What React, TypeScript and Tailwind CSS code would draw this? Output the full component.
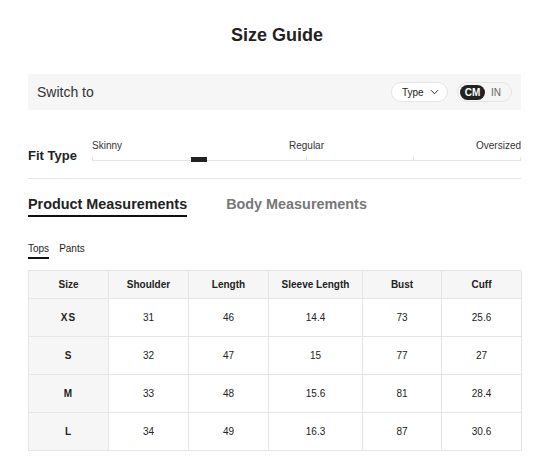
import type { FC } from 'react'

const columns = ['Size', 'Shoulder', 'Length', 'Sleeve Length', 'Bust', 'Cuff']

const rows = [
  ['XS', '31', '46', '14.4', '73', '25.6'],
  ['S', '32', '47', '15', '77', '27'],
  ['M', '33', '48', '15.6', '81', '28.4'],
  ['L', '34', '49', '16.3', '87', '30.6'],
]

const colWidths = ['w-[80px]', 'w-[80px]', 'w-[80px]', 'w-[94px]', 'w-[79px]', 'w-[80px]']

const Chevron: FC = () => (
  <svg width="9" height="6" viewBox="0 0 9 6" fill="none">
    <path d="M1 1.2l3.5 3.5L8 1.2" stroke="#333" strokeWidth="1" />
  </svg>
)

const App: FC = () => {
  return (
    <div className="w-[536px] h-[456px] overflow-hidden bg-white font-['Liberation_Sans',Arial,sans-serif] text-[#222]">
      <div className="ml-[28px] w-[493px]">
        <h2 className="pt-[24px] pl-[5px] text-center text-[18px] font-bold leading-[22px]">Size Guide</h2>

        {/* switch bar */}
        <div className="mt-[28px] flex h-[36px] items-center justify-between bg-[#f6f6f6] px-[9px]">
          <span className="text-[14px] text-[#333]">Switch to</span>
          <div className="flex items-center gap-[9px]">
            <button className="flex h-[20px] w-[57px] items-center gap-[6px] rounded-full border border-[#e5e5e5] bg-white pl-[10px] text-[10px] text-[#222]">
              Type
              <Chevron />
            </button>
            <div className="flex h-[20px] w-[55px] items-center rounded-full border border-[#e5e5e5] bg-[#f6f6f6] px-[2px]">
              <span className="flex h-[15px] w-[25px] items-center justify-center rounded-full bg-[#222] text-[10px] font-bold text-white">
                CM
              </span>
              <span className="ml-[6px] text-[10px] text-[#666]">IN</span>
            </div>
          </div>
        </div>

        {/* fit type */}
        <div className="mt-[30px] flex items-start">
          <div className="mt-[8px] w-[64px] text-[13px] font-bold leading-[16px]">Fit Type</div>
          <div className="flex-1">
            <div className="grid grid-cols-3 text-[10px] leading-[12px] text-[#333]">
              <span>Skinny</span>
              <span className="text-center">Regular</span>
              <span className="text-right">Oversized</span>
            </div>
            <div className="relative mt-[5px] flex h-[4px]">
              <div className="flex-1 border-b border-l border-[#e5e5e5]" />
              <div className="flex-1 border-b border-[#e5e5e5]" />
              <div className="flex-1 border-b border-l border-[#e5e5e5]" />
              <div className="flex-1 border-b border-l border-r border-[#e5e5e5]" />
              <div className="absolute left-1/4 top-0 h-[5px] w-[16px] -translate-x-1/2 bg-[#222]" />
            </div>
          </div>
        </div>

        <div className="mt-[14px] border-t border-[#e5e5e5]" />

        {/* tabs */}
        <div className="mt-[17px] flex gap-[39px] text-[14.4px] font-bold leading-[17px]">
          <span className="border-b-2 border-[#111] pb-[2px]">Product Measurements</span>
          <span className="text-[#777]">Body Measurements</span>
        </div>

        <div className="mt-[26px] flex gap-[10px] text-[10px] leading-[12px]">
          <span className="border-b-2 border-[#111] pb-[2px]">Tops</span>
          <span>Pants</span>
        </div>

        {/* table */}
        <table className="mt-[11px] w-[493px] table-fixed border-collapse text-center text-[10px]">
          <colgroup>
            {colWidths.map((w, i) => (
              <col key={i} className={w} />
            ))}
          </colgroup>
          <thead>
            <tr className="bg-[#f6f6f6]">
              {columns.map((c) => (
                <th key={c} className="h-[28px] border border-[#e5e5e5] font-bold">
                  {c}
                </th>
              ))}
            </tr>
          </thead>
          <tbody>
            {rows.map((r) => (
              <tr key={r[0]}>
                {r.map((v, i) => (
                  <td
                    key={i}
                    className={
                      i === 0
                        ? 'h-[38px] border border-[#e5e5e5] bg-[#f6f6f6] font-bold tracking-[1px]'
                        : 'h-[38px] border border-[#e5e5e5]'
                    }
                  >
                    {v}
                  </td>
                ))}
              </tr>
            ))}
          </tbody>
        </table>
      </div>
    </div>
  )
}

export default App
